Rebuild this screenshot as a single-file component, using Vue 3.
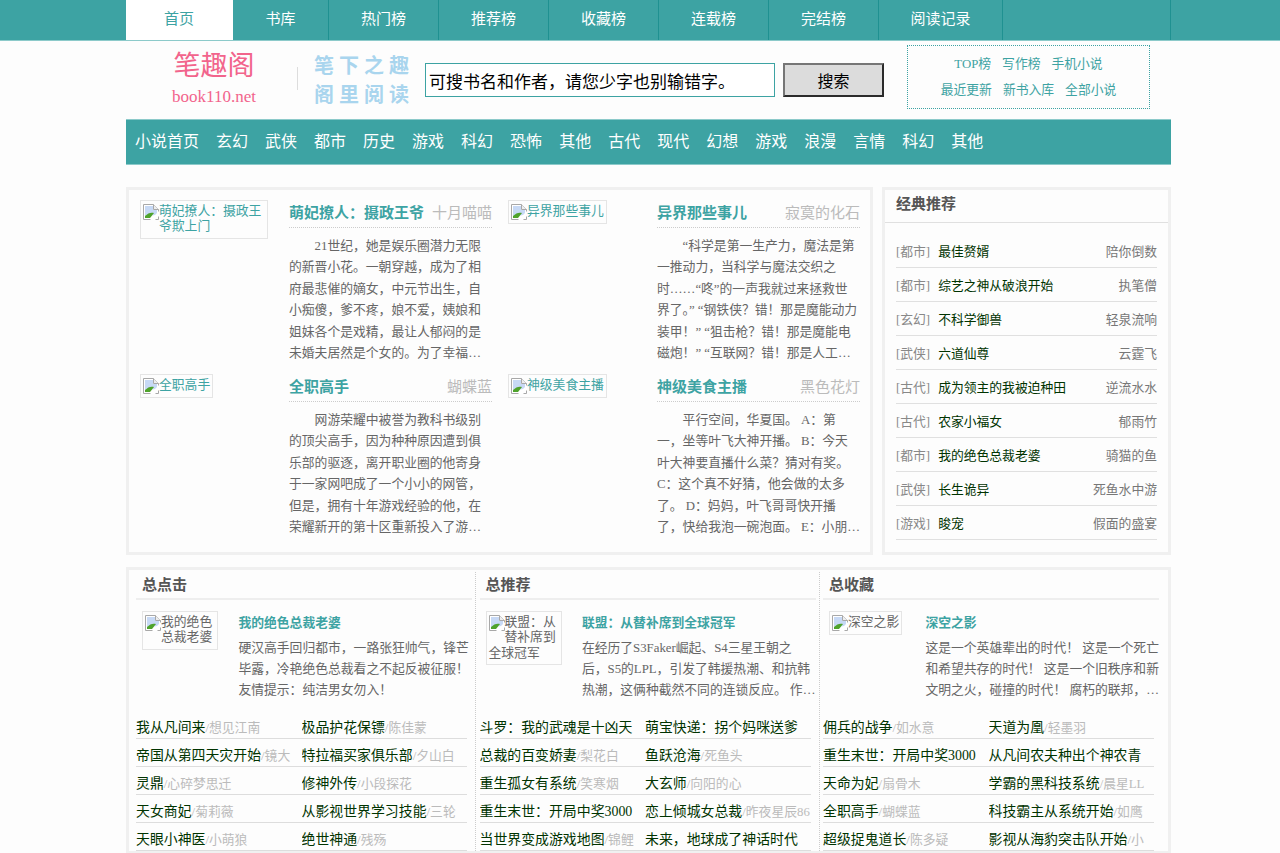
<template>
  <div class="topbar">
    <ul class="wrap topnav">
      <li v-for="item in topNav" :key="item.label" :class="{ on: item.on }" :style="{ width: item.width + 'px' }">{{ item.label }}</li>
    </ul>
  </div>

  <div class="wrap">
    <header class="head">
      <div class="logo">
        <div class="logo-name">笔趣阁</div>
        <div class="logo-url">book110.net</div>
      </div>
      <div class="logo-line"></div>
      <div class="slogan">笔下之趣<br>阁里阅读</div>
      <form class="search" @submit.prevent>
        <input class="search-input" type="text" value="可搜书名和作者，请您少字也别输错字。">
        <button class="search-btn" type="button">搜索</button>
      </form>
      <div class="quick">
        <div v-for="(row, i) in quickLinks" :key="i" class="quick-row">
          <a v-for="link in row" :key="link">{{ link }}</a>
        </div>
      </div>
    </header>

    <nav class="cats">
      <a v-for="(cat, i) in cats" :key="i">{{ cat }}</a>
    </nav>

    <div class="top-row">
      <section class="panel hot">
        <article v-for="book in hotBooks" :key="book.title" class="hot-item">
          <div class="hot-cover">
            <span class="broken teal">
              <svg class="broken-icon" viewBox="0 0 16 16" width="16" height="16">
                <path d="M.5.5h10l5 5v10H.5z" fill="#fff" stroke="#a8a8a8"/>
                <path d="M2 2h8v4h4v5L2 12z" fill="#c7d9f5"/>
                <path d="M2 14v-2c3-3 6-4 9-3l-4 5z" fill="#4fa32c"/>
                <path d="M10.500.5v5h5" fill="#eee" stroke="#a8a8a8"/>
                <path d="M16 7 7 16h5l4-4z" fill="#fff"/>
              </svg>
              {{ book.title === '萌妃撩人：摄政王爷' ? '萌妃撩人：摄政王爷欺上门' : book.title }}
            </span>
          </div>
          <div class="hot-body">
            <div class="hot-head">
              <h3>{{ book.title }}</h3>
              <span>{{ book.author }}</span>
            </div>
            <p class="hot-text">{{ book.text }}</p>
          </div>
        </article>
      </section>

      <aside class="panel classic">
        <h2>经典推荐</h2>
        <ul>
          <li v-for="row in classics" :key="row.name">
            <span class="tag">[{{ row.tag }}]</span>
            <span class="name">{{ row.name }}</span>
            <span class="by">{{ row.author }}</span>
          </li>
        </ul>
      </aside>
    </div>

    <section class="panel ranks">
      <div v-for="rank in ranks" :key="rank.heading" class="rank">
        <h2>{{ rank.heading }}</h2>
        <div class="feature">
          <div class="feature-cover">
            <span class="broken">
              <svg class="broken-icon" viewBox="0 0 16 16" width="16" height="16">
                <path d="M.5.5h10l5 5v10H.5z" fill="#fff" stroke="#a8a8a8"/>
                <path d="M2 2h8v4h4v5L2 12z" fill="#c7d9f5"/>
                <path d="M2 14v-2c3-3 6-4 9-3l-4 5z" fill="#4fa32c"/>
                <path d="M10.500.5v5h5" fill="#eee" stroke="#a8a8a8"/>
                <path d="M16 7 7 16h5l4-4z" fill="#fff"/>
              </svg>
              {{ rank.title }}
            </span>
          </div>
          <div class="feature-body">
            <h3>{{ rank.title }}</h3>
            <p>{{ rank.text }}</p>
          </div>
        </div>
        <ul class="rank-list">
          <li v-for="(row, i) in rank.list" :key="i">{{ row[0] }}<span v-if="row[1]">/{{ row[1] }}</span></li>
        </ul>
      </div>
    </section>
  </div>
</template>

<script setup>
const topNav = [
  { label: '首页', width: 107, on: true },
  { label: '书库', width: 96 },
  { label: '热门榜', width: 110 },
  { label: '推荐榜', width: 110 },
  { label: '收藏榜', width: 110 },
  { label: '连载榜', width: 110 },
  { label: '完结榜', width: 110 },
  { label: '阅读记录', width: 124 },
  { label: '', width: 168 },
];

const quickLinks = [
  ['TOP榜', '写作榜', '手机小说'],
  ['最近更新', '新书入库', '全部小说'],
];

const cats = ['小说首页', '玄幻', '武侠', '都市', '历史', '游戏', '科幻', '恐怖', '其他', '古代', '现代', '幻想', '游戏', '浪漫', '言情', '科幻', '其他'];

const hotBooks = [
  {
    title: '萌妃撩人：摄政王爷',
    author: '十月喵喵',
    text: '21世纪，她是娱乐圈潜力无限的新晋小花。一朝穿越，成为了相府最悲催的嫡女，中元节出生，自小痴傻，爹不疼，娘不爱，姨娘和姐妹各个是戏精，最让人郁闷的是未婚夫居然是个女的。为了幸福，她决定奋起反抗。',
  },
  {
    title: '异界那些事儿',
    author: '寂寞的化石',
    text: '“科学是第一生产力，魔法是第一推动力，当科学与魔法交织之时……“咚”的一声我就过来拯救世界了。” “钢铁侠？错！那是魔能动力装甲！” “狙击枪？错！那是魔能电磁炮！” “互联网？错！那是人工智能的魔法网络！”',
  },
  {
    title: '全职高手',
    author: '蝴蝶蓝',
    text: '网游荣耀中被誉为教科书级别的顶尖高手，因为种种原因遭到俱乐部的驱逐，离开职业圈的他寄身于一家网吧成了一个小小的网管，但是，拥有十年游戏经验的他，在荣耀新开的第十区重新投入了游戏，带着对往昔的回忆。',
  },
  {
    title: '神级美食主播',
    author: '黑色花灯',
    text: '平行空间，华夏国。 A：第一，坐等叶飞大神开播。 B：今天叶大神要直播什么菜？猜对有奖。 C：这个真不好猜，他会做的太多了。 D：妈妈，叶飞哥哥快开播了，快给我泡一碗泡面。 E：小朋友你真可爱，泡面可不行。',
  },
];

const classics = [
  { tag: '都市', name: '最佳赘婿', author: '陪你倒数' },
  { tag: '都市', name: '综艺之神从破浪开始', author: '执笔僧' },
  { tag: '玄幻', name: '不科学御兽', author: '轻泉流响' },
  { tag: '武侠', name: '六道仙尊', author: '云霆飞' },
  { tag: '古代', name: '成为领主的我被迫种田', author: '逆流水水' },
  { tag: '古代', name: '农家小福女', author: '郁雨竹' },
  { tag: '都市', name: '我的绝色总裁老婆', author: '骑猫的鱼' },
  { tag: '武侠', name: '长生诡异', author: '死鱼水中游' },
  { tag: '游戏', name: '睃宠', author: '假面的盛宴' },
];

const ranks = [
  {
    heading: '总点击',
    title: '我的绝色总裁老婆',
    text: '硬汉高手回归都市，一路张狂帅气，锋芒毕露，冷艳绝色总裁看之不起反被征服！友情提示：纯洁男女勿入！',
    list: [
      ['我从凡间来', '想见江南'], ['极品护花保镖', '陈佳蒙'],
      ['帝国从第四天灾开始', '镜大'], ['特拉福买家俱乐部', '夕山白'],
      ['灵鼎', '心碎梦思迁'], ['修神外传', '小段探花'],
      ['天女商妃', '菊莉薇'], ['从影视世界学习技能', '三轮'],
      ['天眼小神医', '小萌狼'], ['绝世神通', '残殇'],
    ],
  },
  {
    heading: '总推荐',
    title: '联盟：从替补席到全球冠军',
    text: '在经历了S3Faker崛起、S4三星王朝之后，S5的LPL，引发了韩援热潮、和抗韩热潮，这俩种截然不同的连锁反应。 作者从这里开始讲述一个新的故事。',
    list: [
      ['斗罗：我的武魂是十凶天'], ['萌宝快递：拐个妈咪送爹'],
      ['总裁的百变娇妻', '梨花白'], ['鱼跃沧海', '死鱼头'],
      ['重生孤女有系统', '笑寒烟'], ['大玄师', '向阳的心'],
      ['重生末世：开局中奖3000'], ['恋上倾城女总裁', '昨夜星辰86'],
      ['当世界变成游戏地图', '锦鲤'], ['未来，地球成了神话时代'],
    ],
  },
  {
    heading: '总收藏',
    title: '深空之影',
    text: '这是一个英雄辈出的时代！ 这是一个死亡和希望共存的时代！ 这是一个旧秩序和新文明之火，碰撞的时代！ 腐朽的联邦，崛起的帝国，燃烧的星空。',
    list: [
      ['佣兵的战争', '如水意'], ['天道为凰', '轻墨羽'],
      ['重生末世：开局中奖3000'], ['从凡间农夫种出个神农青'],
      ['天命为妃', '扇骨木'], ['学霸的黑科技系统', '晨星LL'],
      ['全职高手', '蝴蝶蓝'], ['科技霸主从系统开始', '如鹰'],
      ['超级捉鬼道长', '陈多疑'], ['影视从海豹突击队开始', '小'],
    ],
  },
];
</script>

<style>
body {
  background: #fdfdfd;
  font-family: "Liberation Serif", "Noto Sans CJK SC", serif;
}
</style>

<style scoped>
* {
  box-sizing: border-box;
}

ul {
  list-style: none;
  margin: 0;
  padding: 0;
}

h2, h3, p {
  margin: 0;
}

.wrap {
  width: 1045px;
  margin-left: 126px;
}

.topbar {
  background: #3da3a3;
  border-bottom: 1px solid #8ccaca;
}

.topnav {
  display: flex;
  height: 40px;
}

.topnav li {
  border-right: 1px solid #1f9191;
  color: #fff;
  font-size: 15px;
  line-height: 38px;
  text-align: center;
}

.topnav li.on {
  background: #fff;
  color: #3da3a3;
  border-right-color: #fff;
}

.head {
  display: flex;
  height: 78px;
}

.logo {
  width: 171px;
  padding: 8px 0 0 5px;
  text-align: center;
  color: #f2648c;
}

.logo-name {
  font-size: 27px;
  line-height: 34px;
}

.logo-url {
  font-size: 17px;
  line-height: 24px;
  margin-top: 2px;
}

.logo-line {
  width: 1px;
  height: 23px;
  margin-top: 26px;
  background: #ddd;
}

.slogan {
  width: 127px;
  padding: 11px 0 0 16px;
  color: #a9d5ee;
  font-size: 20px;
  font-weight: 700;
  letter-spacing: 5px;
  line-height: 29px;
}

.search {
  display: flex;
  width: 482px;
  padding-top: 22px;
}

.search-input {
  width: 350px;
  height: 34px;
  padding: 0 3px;
  border: 1px solid #3da3a3;
  background: #fff;
  color: #000;
  font-family: inherit;
  font-size: 17px;
}

.search-btn {
  width: 101px;
  height: 34px;
  margin-left: 8px;
  border: 2px solid;
  border-color: #767676 #2b2b2b #2b2b2b #767676;
  background: #dcdcdc;
  color: #000;
  font-family: inherit;
  font-size: 16px;
}

.quick {
  width: 243px;
  height: 64px;
  margin-top: 4px;
  padding-top: 5px;
  border: 1px dotted #3da3a3;
}

.quick-row {
  display: flex;
  justify-content: center;
  gap: 11px;
  font-size: 12.8px;
  line-height: 26px;
  color: #3da3a3;
}

.cats {
  display: flex;
  gap: 17px;
  height: 46px;
  padding-left: 9px;
  border: 1px solid #8ccaca;
  border-width: 1px 0;
  background: #3da3a3;
  color: #fff;
  font-size: 16px;
  line-height: 43px;
}

.top-row {
  display: flex;
  justify-content: space-between;
  margin-top: 22px;
}

.panel {
  border: 3px solid #f0f0f0;
}

.hot {
  display: grid;
  grid-template-columns: 368px 368px;
  grid-auto-rows: 174px;
  width: 747px;
  height: 368px;
  padding: 10px 0 0 11px;
}

.hot-item {
  display: flex;
}

.hot-cover {
  width: 149px;
}

.broken {
  display: inline-block;
  max-width: 128px;
  padding: 3px 2px;
  border: 1px solid #e5e5e5;
  color: #666;
  font-size: 12.8px;
  line-height: 15.4px;
  vertical-align: top;
}

.broken.teal {
  color: #3da3a3;
}

.broken-icon {
  display: block;
  float: left;
}

.hot-body {
  width: 203px;
}

.hot-head {
  display: flex;
  justify-content: space-between;
  height: 28px;
  border-bottom: 1px dotted #ccc;
  font-size: 15px;
  line-height: 26px;
  color: #bbb;
}

.hot-head h3 {
  color: #3da3a3;
  font-size: 15px;
}

.hot-text {
  display: -webkit-box;
  -webkit-box-orient: vertical;
  -webkit-line-clamp: 6;
  overflow: hidden;
  margin-top: 8px;
  color: #666;
  font-size: 12.8px;
  line-height: 21.4px;
  text-indent: 2em;
}

.classic {
  width: 289px;
  height: 368px;
}

.classic h2 {
  height: 33px;
  padding-left: 11px;
  border-bottom: 1px solid #e0e0e0;
  color: #555;
  font-size: 15px;
  line-height: 29px;
}

.classic ul {
  margin: 11px 11px 0;
}

.classic li {
  display: flex;
  height: 34px;
  padding-top: 3px;
  border-bottom: 1px solid #e0e0e0;
  font-size: 12.8px;
  line-height: 30px;
}

.tag {
  margin-right: 8px;
  color: #888;
}

.name {
  color: #030;
}

.by {
  margin-left: auto;
  color: #777;
}

.ranks {
  display: flex;
  margin-top: 12px;
  padding: 2px 0 0 2.5px;
}

.rank {
  width: 343.5px;
  padding: 0 3px 0 3.5px;
  border-left: 1px dotted #ccc;
}

.rank:first-child {
  border-left-color: transparent;
}

.rank h2 {
  height: 28px;
  padding-left: 6px;
  border-bottom: 2px solid #eee;
  color: #555;
  font-size: 15px;
  line-height: 26px;
}

.feature {
  display: flex;
  height: 111px;
  padding: 11px 0 0 6px;
}

.feature-cover {
  width: 97px;
}

.feature-cover .broken {
  max-width: 76px;
}

.feature-body {
  width: 235px;
}

.feature-body h3 {
  color: #3da3a3;
  font-size: 12.8px;
  line-height: 24px;
}

.feature-body p {
  display: -webkit-box;
  -webkit-box-orient: vertical;
  -webkit-line-clamp: 3;
  overflow: hidden;
  margin-top: 3px;
  color: #666;
  font-size: 12.8px;
  line-height: 21.2px;
}

.rank-list {
  display: grid;
  grid-template-columns: 165.5px 165.5px;
  width: 331px;
}

.rank-list li {
  height: 28px;
  padding-top: 6px;
  border-bottom: 1px solid #ddd;
  overflow: hidden;
  white-space: nowrap;
  color: #030;
  font-size: 13.9px;
  line-height: 22px;
}

.rank-list span {
  color: #bbb;
  font-size: 12.8px;
}
</style>
